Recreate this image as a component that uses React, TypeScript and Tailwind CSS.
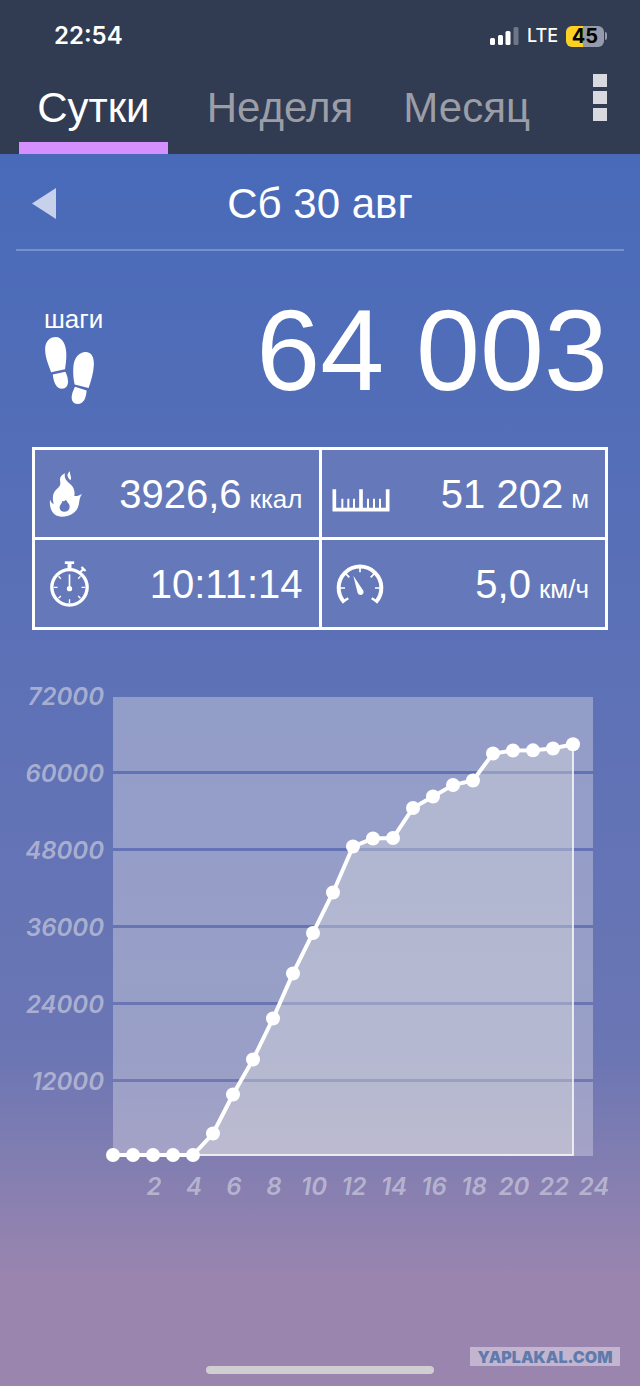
/**
 * Pedometer day view - period tabs, step total, activity stats and the cumulative steps chart
 */

import { useState } from 'react';
import type { ReactNode } from 'react';

const TABS = ['Сутки', 'Неделя', 'Месяц'];

// Cumulative steps at the start of every hour
const HOURLY_STEPS = [
  0, 0, 0, 0, 0, 3350, 9430, 14880, 21270, 28290, 34600, 40910,
  48080, 49320, 49400, 54080, 55870, 57660, 58360, 62570, 63040, 63060, 63350, 64003,
];

const CHART = { left: 113, right: 593, bottom: 486, hourWidth: 20, gridStep: 77 };
const GRID_VALUES = [12000, 24000, 36000, 48000, 60000, 72000];
const HOUR_LABELS = [2, 4, 6, 8, 10, 12, 14, 16, 18, 20, 22, 24];

const xOf = (hour: number) => CHART.left + hour * CHART.hourWidth;
const yOf = (steps: number) => CHART.bottom - (steps / 12000) * CHART.gridStep;

function FootprintsIcon() {
  return (
    <svg viewBox="45 48 153 208" className="h-[69px] w-[51px]" fill="currentColor" aria-hidden="true">
      <path d="M66 157C60 138 48 115 48 88C48 64 62 51 80 51C100 51 112 75 112 104C112 122 110 135 108 148Z" />
      <path d="M71 164L109 156C114 166 117 176 117 186C117 198 110 207 99 207C82 207 74 190 71 164Z" />
      <path d="M137 194C133 178 132 160 133 143C134 115 150 96 170 96C188 96 196 112 195 135C194 160 186 185 179 205Z" />
      <path d="M138 201L173 212C172 235 163 253 146 253C134 253 128 245 128 233C128 222 133 212 138 201Z" />
    </svg>
  );
}

function FlameIcon() {
  return (
    <svg viewBox="84 88 102 138" className="h-[46px] w-[34px]" fill="currentColor" aria-hidden="true">
      <path
        fillRule="evenodd"
        d="M123 225C99 225 84 206 87 174C90 181 93 185 98 187C92 164 97 150 110 140C119 132 119 126 117 116C116 107 121 100 132 95C129 108 134 115 144 124C155 133 163 143 160 163C168 164 176 161 183 157C176 167 176 174 174 185C171 209 151 225 123 225ZM130 210C140 210 146 204 146 195C146 185 139 184 135 174C130 179 127 180 123 178C124 186 116 188 116 198C116 205 121 210 130 210Z"
      />
      <path d="M147 89C136 98 138 106 148 116C154 108 146 101 147 89Z" />
    </svg>
  );
}

function StopwatchIcon() {
  return (
    <svg viewBox="84 362 122 138" className="h-[46px] w-[41px]" fill="none" stroke="currentColor" aria-hidden="true">
      <circle cx="145" cy="441" r="53" strokeWidth="10" />
      <path d="M131 367H159" strokeWidth="8" />
      <path d="M145 368V386" strokeWidth="12" />
      <path d="M178 395L187 386M181 380L193 392" strokeWidth="7" />
      <path
        d="M145 488V477M98 441H109M192 441H181M112 408L119 415M178 408L171 415M112 474L119 467M178 474L171 467"
        strokeWidth="4"
      />
      <path d="M145 402V441" strokeWidth="5" />
      <circle cx="145" cy="445" r="8" fill="currentColor" stroke="none" />
    </svg>
  );
}

function RulerIcon() {
  return (
    <svg viewBox="64 111 174 108" className="-ml-1 h-9 w-[58px]" fill="none" stroke="currentColor" aria-hidden="true">
      <path d="M71 151V212H231V151M151 151V212" strokeWidth="11" />
      <path d="M95 179V208M113 179V208M130 179V208M172 179V208M190 179V208M208 179V208" strokeWidth="6" />
    </svg>
  );
}

function GaugeIcon() {
  return (
    <svg viewBox="78 372 144 120" className="h-10 w-12" fill="none" stroke="currentColor" aria-hidden="true">
      <path d="M103 487A64 64 0 1 1 197 487" strokeWidth="12" />
      <path d="M98 485L115 475M202 485L185 475" strokeWidth="7" />
      <path d="M90 444H105M210 444H195M107 401L118 412M193 401L182 412M150 383V397" strokeWidth="5" />
      <path d="M130 407L160 452C164 464 148 470 143 459Z" fill="currentColor" stroke="none" />
    </svg>
  );
}

function StatusBar() {
  return (
    <div className="flex h-[70px] items-center justify-between pl-[54px] pr-[33px] pt-0.5 font-['Inter',sans-serif] text-white">
      <span className="text-2xl font-semibold">22:54</span>
      <div className="flex items-center gap-2">
        <svg viewBox="0 0 29 18" className="h-[18px] w-[29px]" fill="currentColor" aria-hidden="true">
          <rect x="0" y="11" width="5" height="7" rx="1.5" />
          <rect x="8" y="8" width="5" height="10" rx="1.5" />
          <rect x="15.5" y="4" width="5" height="14" rx="1.5" />
          <rect x="23.5" y="0" width="5" height="18" rx="1.5" opacity="0.3" />
        </svg>
        <span className="text-lg font-medium">LTE</span>
        <div className="flex items-center gap-px">
          <span className="flex h-[21px] w-[38px] items-center justify-center rounded-md bg-linear-to-r from-[#fdd123] from-45% to-[#969bab] to-45% text-xl font-bold text-black">
            45
          </span>
          <span className="h-2 w-0.5 rounded-r-full bg-[#969bab]" />
        </div>
      </div>
    </div>
  );
}

interface TabBarProps {
  active: string;
  onChange: (tab: string) => void;
}

function TabBar({ active, onChange }: TabBarProps) {
  return (
    <div className="flex h-[84px]">
      <nav className="flex flex-1">
        {TABS.map((tab) => {
          const isActive = tab === active;
          return (
            <button
              key={tab}
              type="button"
              onClick={() => onChange(tab)}
              className={`mx-[19px] flex-1 border-b-12 pt-1 text-[42px] leading-none ${
                isActive ? 'border-[#d68fff] text-white' : 'border-transparent text-[#9b9ea6]'
              }`}
            >
              {tab}
            </button>
          );
        })}
      </nav>
      <button type="button" aria-label="Меню" className="flex w-20 flex-col items-center gap-1 pt-1">
        <span className="h-[13px] w-3.5 bg-[#d9dae0]" />
        <span className="h-[13px] w-3.5 bg-[#d9dae0]" />
        <span className="h-[13px] w-3.5 bg-[#d9dae0]" />
      </button>
    </div>
  );
}

interface StatProps {
  icon: ReactNode;
  label: string;
  value: string;
  unit?: string;
}

function Stat({ icon, label, value, unit }: StatProps) {
  return (
    <div className="flex h-[87px] items-center justify-between bg-[#6579ba] pl-3.5 pr-4">
      <dt aria-label={label}>{icon}</dt>
      <dd className="flex items-baseline gap-2 whitespace-nowrap text-[40px] leading-none">
        {value}
        {unit && <span className="text-[26px] leading-none">{unit}</span>}
      </dd>
    </div>
  );
}

function StepsChart() {
  const points = HOURLY_STEPS.map((steps, hour) => `${xOf(hour)},${yOf(steps)}`).join(' ');
  const lastX = xOf(HOURLY_STEPS.length - 1);

  return (
    <svg
      viewBox="0 0 640 540"
      className="mt-[39px] w-full font-['Inter',sans-serif] text-[24px] font-semibold italic"
      role="img"
      aria-label="Шаги"
    >
      {/* Bands between grid lines */}
      {GRID_VALUES.map((value) => (
        <rect
          key={value}
          x={CHART.left}
          y={yOf(value) + 4}
          width={CHART.right - CHART.left}
          height={74}
          className="fill-[#cfcfdc]/47"
        />
      ))}

      {/* Axis labels */}
      <g className="fill-[#d2d2e1]/65">
        {GRID_VALUES.map((value) => (
          <text key={value} x={CHART.left - 9} y={yOf(value) + 12} textAnchor="end">
            {value}
          </text>
        ))}
        {HOUR_LABELS.map((hour) => (
          <text key={hour} x={xOf(hour) + 1} y={CHART.bottom + 40} textAnchor="middle">
            {hour}
          </text>
        ))}
      </g>

      {/* Area and line */}
      <polygon
        points={`${points} ${lastX},${CHART.bottom} ${CHART.left},${CHART.bottom}`}
        className="fill-[#e3e3e0]/37"
      />
      <path
        d={`M${xOf(4)} ${CHART.bottom}H${lastX}V${yOf(64003)}`}
        className="fill-none stroke-white/75 stroke-2"
      />
      <polyline points={points} className="fill-none stroke-white stroke-[4px]" />
      {HOURLY_STEPS.map((steps, hour) => (
        <circle key={hour} cx={xOf(hour)} cy={yOf(steps)} r="7" className="fill-white" />
      ))}
    </svg>
  );
}

export default function App() {
  const [activeTab, setActiveTab] = useState('Сутки');

  return (
    <div className="flex min-h-screen flex-col bg-linear-to-b from-[#486ab9] from-11% via-[#6b76b4] via-76% to-[#9985ae] to-92% font-['Liberation_Sans',Arial,sans-serif] text-white">
      <header className="bg-[#313b52]">
        <StatusBar />
        <TabBar active={activeTab} onChange={setActiveTab} />
      </header>

      <main>
        {/* Date switcher */}
        <div className="mx-4 grid h-[97px] grid-cols-[1fr_auto_1fr] items-center border-b-2 border-[#7890cb] px-4 pt-1">
          <button type="button" aria-label="Предыдущий день">
            <svg viewBox="0 0 24 31" className="h-[31px] w-6 fill-[#c8d1ec]" aria-hidden="true">
              <path d="M24 0V31L0 15.5Z" />
            </svg>
          </button>
          <h1 className="text-[42px] leading-none">Сб 30 авг</h1>
        </div>

        {/* Step total */}
        <section className="flex items-start justify-between px-8 pt-[41px]">
          <div className="flex flex-col items-start gap-0.5 pl-3 pt-3">
            <h2 className="text-[26px] leading-[30px]">шаги</h2>
            <FootprintsIcon />
          </div>
          <p className="whitespace-nowrap text-[115px] leading-[116px]">64 003</p>
        </section>

        <dl className="mx-8 mt-[39px] grid grid-cols-2 gap-[3px] border-3 border-white bg-white">
          <Stat icon={<FlameIcon />} label="Калории" value="3926,6" unit="ккал" />
          <Stat icon={<RulerIcon />} label="Дистанция" value="51 202" unit="м" />
          <Stat icon={<StopwatchIcon />} label="Время" value="10:11:14" />
          <Stat icon={<GaugeIcon />} label="Скорость" value="5,0" unit="км/ч" />
        </dl>

        <StepsChart />
      </main>

      <footer className="relative mt-auto flex h-10 items-end justify-center pb-3">
        <span className="h-2 w-[228px] rounded-full bg-[#cfcfd1]" />
        <span className="absolute bottom-5 right-5 flex h-[19px] w-[150px] items-center justify-center bg-[#c3b4d0] font-['Inter',sans-serif] text-base font-black text-[#5f7bab]">
          YAPLAKAL.COM
        </span>
      </footer>
    </div>
  );
}
